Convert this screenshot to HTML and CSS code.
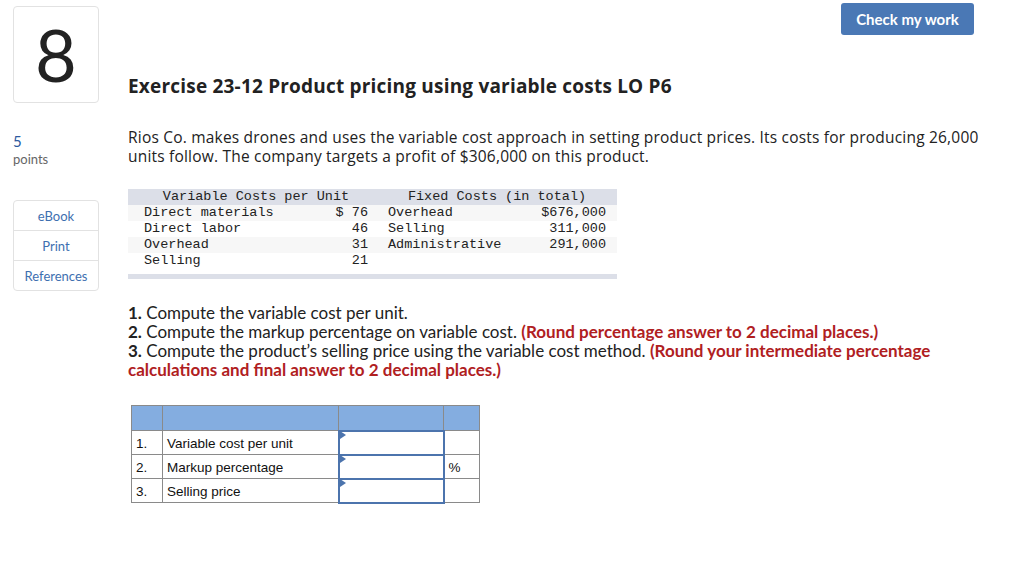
FILE: index.html
```html
<!DOCTYPE html>
<html>
<head>
<meta charset="utf-8">
<link rel="stylesheet" href="styles.css">
</head>
<body>
<div class="page">
  <aside class="side">
    <div class="qnum">8</div>
    <div class="pts"><div class="pts-n">5</div><div class="pts-l">points</div></div>
    <div class="links">
      <div class="link">eBook</div>
      <div class="link">Print</div>
      <div class="link">References</div>
    </div>
  </aside>
  <main class="main">
    <div class="topbar"><button class="check">Check my work</button></div>
    <h1 class="title">Exercise 23-12 Product pricing using variable costs LO P6</h1>
    <p class="intro">Rios Co. makes drones and uses the variable cost approach in setting product prices. Its costs for producing 26,000 units follow. The company targets a profit of $306,000 on this product.</p>
    <div class="data">
      <div class="drow dhead"><span class="span2">Variable Costs per Unit</span><span class="span2b">Fixed Costs (in total)</span></div>
      <div class="drow alt"><span>Direct materials</span><span class="r">$ 76</span><span class="fl">Overhead</span><span class="r">$676,000</span></div>
      <div class="drow"><span>Direct labor</span><span class="r">46</span><span class="fl">Selling</span><span class="r">311,000</span></div>
      <div class="drow alt"><span>Overhead</span><span class="r">31</span><span class="fl">Administrative</span><span class="r">291,000</span></div>
      <div class="drow"><span>Selling</span><span class="r">21</span><span class="fl"></span><span></span></div>
      <div class="dfoot"></div>
    </div>
    <div class="steps">
      <div><b>1.</b> Compute the variable cost per unit.</div>
      <div><b>2.</b> Compute the markup percentage on variable cost. <span class="red">(Round percentage answer to 2 decimal places.)</span></div>
      <div><b>3.</b> Compute the product’s selling price using the variable cost method. <span class="red">(Round your intermediate percentage calculations and final answer to 2 decimal places.)</span></div>
    </div>
    <table class="ans">
      <colgroup><col class="c1"><col class="c2"><col class="c3"><col class="c4"></colgroup>
      <tr class="ahead"><th></th><th></th><th></th><th></th></tr>
      <tr><td>1.</td><td>Variable cost per unit</td><td class="inp"><span class="flag"></span></td><td></td></tr>
      <tr><td>2.</td><td>Markup percentage</td><td class="inp"><span class="flag"></span></td><td>%</td></tr>
      <tr><td>3.</td><td>Selling price</td><td class="inp"><span class="flag"></span></td><td></td></tr>
    </table>
  </main>
</div>
</body>
</html>
```
FILE: styles.css
```css
* { box-sizing: border-box; }
html, body { margin: 0; padding: 0; background: #fff; }
body { font-family: "Open Sans", "Lato", sans-serif; color: #222; }
.page { display: flex; align-items: flex-start; }
.side { width: 86px; margin-left: 13px; margin-top: 6px; display: flex; flex-direction: column; }
.qnum { height: 97px; border: 1px solid #e2e2e2; border-radius: 4px; display: flex; align-items: center; justify-content: center; font-family: "Lato", sans-serif; font-size: 72px; font-weight: 400; color: #222; line-height: 1; padding-bottom: 2px; }
.pts { margin-top: 29px; font-family: "Lato", sans-serif; }
.pts-n { font-size: 15px; color: #2c5aa0; line-height: 18px; }
.pts-l { font-size: 13px; color: #666; line-height: 18px; }
.links { margin-top: 32px; border: 1px solid #e2e2e2; border-radius: 4px; font-family: "Lato", sans-serif; }
.link { height: 30px; display: flex; align-items: center; justify-content: center; font-size: 13px; color: #3e6fb0; border-top: 1px solid #e2e2e2; }
.link:first-child { border-top: none; height: 29px; }
.main { margin-left: 29px; width: 857px; }
.topbar { display: flex; justify-content: flex-end; padding-top: 3px; padding-right: 11px; }
.check { width: 133px; height: 32px; background: #4a78b5; color: #fff; border: none; border-radius: 3px; font-family: "Lato", sans-serif; font-weight: 700; font-size: 15px; padding: 0; }
.title { margin: 40px 0 0; font-size: 19px; letter-spacing: 0.2px; font-weight: 700; line-height: 22px; color: #222; }
.intro { margin: 31px 0 0; font-size: 15.5px; letter-spacing: 0.2px; line-height: 19px; color: #222; }
.data { margin-top: 23px; width: 489px; font-family: "Liberation Mono", monospace; font-size: 13.5px; color: #222; }
.drow { display: grid; grid-template-columns: 170px 54px 160px 78px; padding-left: 16px; padding-right: 11px; height: 16px; line-height: 16px; }
.fl { margin-left: 20px; }
.dhead { background: #dcdfe8; }
.dhead .span2 { grid-column: 1 / 3; text-align: center; }
.dhead .span2b { grid-column: 3 / 5; text-align: center; margin-left: 20px; }
.alt { background: #f7f7f7; }
.r { text-align: right; }
.dfoot { height: 5px; margin-top: 5px; background: #dcdfe8; }
.steps { margin-top: 24px; font-family: "Lato", sans-serif; font-size: 17px; line-height: 19px; color: #222; }
.steps b { font-weight: 700; }
.red { color: #b0201f; font-weight: 700; }
.ans { margin-top: 26px; margin-left: 3px; border-collapse: collapse; font-family: "Liberation Sans", Arial, sans-serif; font-size: 13.5px; color: #111; }
.c1 { width: 31px; } .c2 { width: 176px; } .c3 { width: 105px; } .c4 { width: 36px; }
.ans th, .ans td { border: 1px solid #8a8a8a; padding: 0 0 0 4px; text-align: left; }
.ahead th { background: #84ade0; height: 25px; }
.ans td { height: 24px; padding-top: 2px; }
.ans td.inp { position: relative; border: 2px solid #4c74ad; padding: 0; }
.flag { position: absolute; left: 0; top: -1px; width: 0; height: 0; border-top: 4px solid transparent; border-bottom: 4px solid transparent; border-left: 6px solid #4c74ad; }
```
